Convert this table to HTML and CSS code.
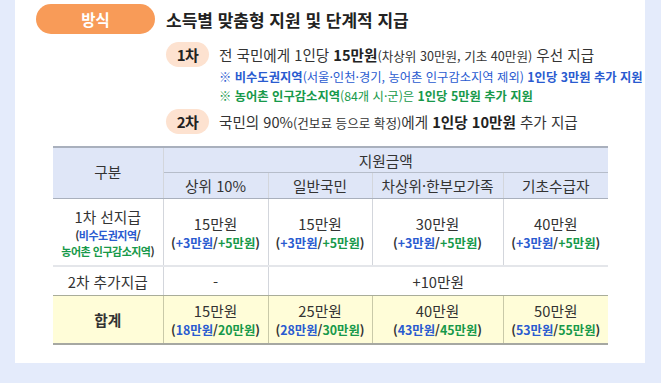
FILE: index.html
```html
<!DOCTYPE html>
<html lang="ko">
<head>
<meta charset="utf-8">
<link rel="stylesheet" href="styles.css">
</head>
<body>
<div class="panel">
  <div class="head">
    <div class="tag">방식</div>
    <h1 class="title">소득별 맞춤형 지원 및 단계적 지급</h1>
  </div>
  <div class="steps">
    <div class="step">
      <span class="chip">1차</span>
      <span class="txt">전 국민에게 1인당 <b>15만원</b><small>(차상위 30만원, 기초 40만원)</small> 우선 지급</span>
    </div>
    <p class="note blue">※ 비수도권지역<span class="thin">(서울·인천·경기, 농어촌 인구감소지역 제외)</span> 1인당 3만원 추가 지원</p>
    <p class="note green">※ 농어촌 인구감소지역<span class="thin">(84개 시·군)은</span> 1인당 5만원 추가 지원</p>
    <div class="step">
      <span class="chip">2차</span>
      <span class="txt">국민의 90%<small>(건보료 등으로 확정)</small>에게 <b>1인당 10만원</b> 추가 지급</span>
    </div>
  </div>
  <table class="grid">
    <colgroup>
      <col class="c0"><col class="c1"><col class="c2"><col class="c3"><col class="c4">
    </colgroup>
    <thead>
      <tr class="h1">
        <th rowspan="2" class="first">구분</th>
        <th colspan="4">지원금액</th>
      </tr>
      <tr class="h2">
        <th>상위 10%</th>
        <th>일반국민</th>
        <th>차상위·한부모가족</th>
        <th>기초수급자</th>
      </tr>
    </thead>
    <tbody>
      <tr class="r1">
        <td class="first"><div class="big">1차 선지급</div><div class="sub small">(<span class="blue">비수도권지역</span>/<br><span class="green">농어촌 인구감소지역</span>)</div></td>
        <td><div class="big">15만원</div><div class="sub">(<span class="blue">+3만원</span>/<span class="green">+5만원</span>)</div></td>
        <td><div class="big">15만원</div><div class="sub">(<span class="blue">+3만원</span>/<span class="green">+5만원</span>)</div></td>
        <td><div class="big">30만원</div><div class="sub">(<span class="blue">+3만원</span>/<span class="green">+5만원</span>)</div></td>
        <td><div class="big">40만원</div><div class="sub">(<span class="blue">+3만원</span>/<span class="green">+5만원</span>)</div></td>
      </tr>
      <tr class="r2">
        <td class="first">2차 추가지급</td>
        <td>-</td>
        <td colspan="3">+10만원</td>
      </tr>
      <tr class="tot">
        <td class="first strong">합계</td>
        <td><div class="big">15만원</div><div class="sub">(<span class="blue">18만원</span>/<span class="green">20만원</span>)</div></td>
        <td><div class="big">25만원</div><div class="sub">(<span class="blue">28만원</span>/<span class="green">30만원</span>)</div></td>
        <td><div class="big">40만원</div><div class="sub">(<span class="blue">43만원</span>/<span class="green">45만원</span>)</div></td>
        <td><div class="big">50만원</div><div class="sub">(<span class="blue">53만원</span>/<span class="green">55만원</span>)</div></td>
      </tr>
    </tbody>
  </table>
</div>
</body>
</html>
```
FILE: styles.css
```css
html, body {
  margin: 0;
  padding: 0;
}
body {
  background: #e4ebfb;
  font-family: "Noto Sans CJK KR", "Noto Sans", sans-serif;
  color: #333;
  width: 661px;
  height: 383px;
  overflow: hidden;
}
.panel {
  margin-left: 15px;
  width: 630px;
  height: 363px;
  background: #fff;
  box-sizing: border-box;
  padding: 4px 0 0 21px;
}
.head {
  display: flex;
  align-items: center;
  gap: 11px;
  height: 30px;
}
.tag {
  width: 119px;
  height: 30px;
  border-radius: 15px;
  background: #f89b58;
  color: #fff;
  font-weight: 700;
  font-size: 15.5px;
  display: flex;
  align-items: center;
  justify-content: center;
}
.title {
  margin: 0;
  font-size: 17px;
  font-weight: 700;
  color: #222;
}
.steps {
  margin-left: 130px;
  padding-top: 8px;
}
.step {
  display: flex;
  align-items: center;
  gap: 10px;
  height: 25px;
}
.chip {
  width: 43px;
  height: 25px;
  border-radius: 13px;
  background: #fde2d0;
  color: #222;
  font-weight: 700;
  font-size: 15px;
  display: flex;
  align-items: center;
  justify-content: center;
  letter-spacing: -0.5px;
}
.txt {
  font-size: 14.6px;
  color: #333;
}
.txt b {
  color: #222;
}
.txt small {
  font-size: 12.6px;
}
.note {
  margin: 0 0 0 53px;
  font-size: 12.3px;
  font-weight: 700;
  line-height: 19px;
}
.note .thin {
  font-weight: 400;
}
.note.blue { margin-top: 1px; }
.note.green { margin-bottom: 3px; }
.blue { color: #2a5bd0; }
.green { color: #17994a; }
.grid {
  margin: 12px 0 0 17px;
  width: 555px;
  border-collapse: collapse;
  table-layout: fixed;
  text-align: center;
  color: #333;
}
.c0 { width: 110px; }
.c1 { width: 105px; }
.c2 { width: 104px; }
.c3 { width: 131px; }
.c4 { width: 105px; }
.grid th, .grid td {
  border-left: 1px solid #d3d6dc;
  border-right: 1px solid #d3d6dc;
  padding: 0;
}
.grid th.first, .grid td.first {
  border-left: none;
}
.grid tr > :last-child {
  border-right: none;
}
.grid thead th {
  background: #dfe6f7;
  font-weight: 400;
  font-size: 14.7px;
  color: #333;
}
.grid .h1 th {
  border-top: 2px solid #a9b0bd;
  height: 24px;
}
.grid .h1 th[colspan] {
  border-bottom: 1px solid #b6bdca;
}
.grid .h2 th {
  height: 25px;
  border-bottom: 1px solid #a9b0bd;
}
.grid .h1 th.first {
  border-bottom: 1px solid #a9b0bd;
  padding-bottom: 4px;
}
.big {
  font-size: 14.7px;
  line-height: 21px;
}
.sub {
  font-size: 12.4px;
  font-weight: 700;
  line-height: 18px;
}
.sub.small {
  font-size: 11px;
  line-height: 16px;
  letter-spacing: -0.5px;
}
.r1 td {
  height: 66px;
  border-bottom: 2px solid #e4e6ea;
}
.r2 td {
  height: 28px;
  font-size: 14.7px;
  border-bottom: 1px solid #a9ad9a;
}
.tot td {
  height: 47px;
  background: #fffdd8;
  border-left-color: #c9c9a8;
  border-right-color: #c9c9a8;
  border-bottom: 2px solid #a6a8a2;
}
.tot td.strong {
  font-size: 14.7px;
  font-weight: 700;
  color: #333;
}
```
